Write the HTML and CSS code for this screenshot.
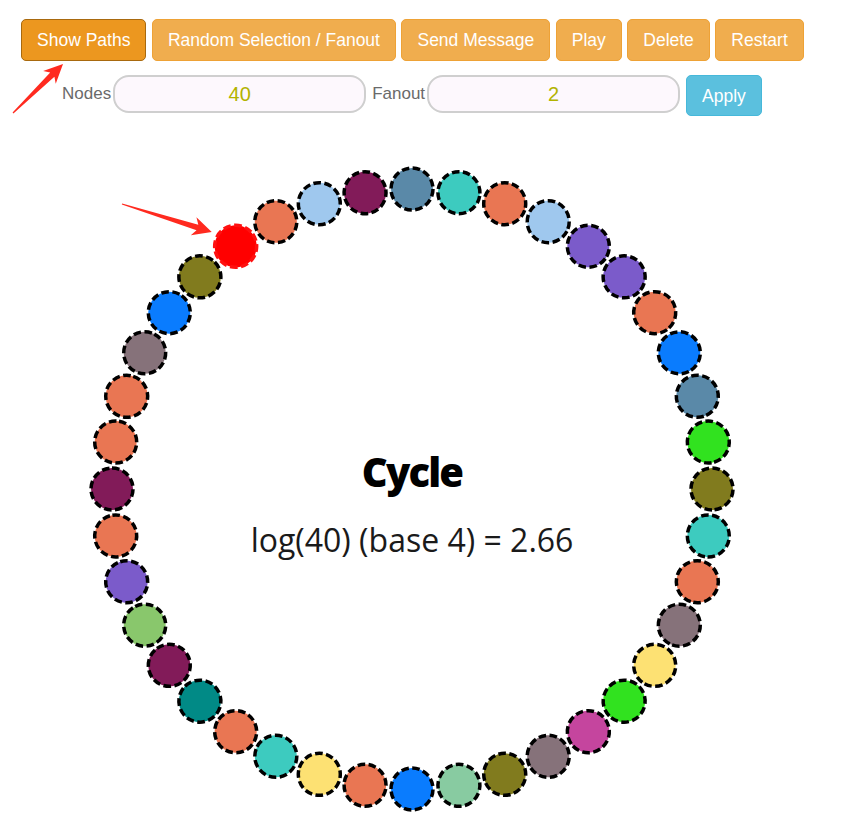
FILE: index.html
```html
<!DOCTYPE html>
<html>
<head>
<meta charset="utf-8">
<link rel="stylesheet" href="styles.css">
</head>
<body>
<div class="app">
  <div class="toolbar">
    <button class="btn btn-warning active">Show Paths</button>
    <button class="btn btn-warning">Random Selection / Fanout</button>
    <button class="btn btn-warning">Send Message</button>
    <button class="btn btn-warning">Play</button>
    <button class="btn btn-warning">Delete</button>
    <button class="btn btn-warning">Restart</button>
  </div>
  <div class="params">
    <label class="param-label label-nodes">Nodes</label>
    <input class="param-input input-nodes" type="text" value="40">
    <label class="param-label label-fanout">Fanout</label>
    <input class="param-input input-fanout" type="text" value="2">
    <button class="btn btn-info">Apply</button>
  </div>
</div>

<svg class="graph" width="848" height="697" viewBox="0 0 848 697">
  <g transform="translate(412 359)">
    <circle class="node c-steel" r="21" cy="-300" transform="rotate(0)"/>
    <circle class="node c-teal" r="21" cy="-300" transform="rotate(9)"/>
    <circle class="node c-orange" r="21" cy="-300" transform="rotate(18)"/>
    <circle class="node c-lightblue" r="21" cy="-300" transform="rotate(27)"/>
    <circle class="node c-purple" r="21" cy="-300" transform="rotate(36)"/>
    <circle class="node c-purple" r="21" cy="-300" transform="rotate(45)"/>
    <circle class="node c-orange" r="21" cy="-300" transform="rotate(54)"/>
    <circle class="node c-blue" r="21" cy="-300" transform="rotate(63)"/>
    <circle class="node c-steel" r="21" cy="-300" transform="rotate(72)"/>
    <circle class="node c-green" r="21" cy="-300" transform="rotate(81)"/>
    <circle class="node c-olive" r="21" cy="-300" transform="rotate(90)"/>
    <circle class="node c-teal" r="21" cy="-300" transform="rotate(99)"/>
    <circle class="node c-orange" r="21" cy="-300" transform="rotate(108)"/>
    <circle class="node c-mauve" r="21" cy="-300" transform="rotate(117)"/>
    <circle class="node c-yellow" r="21" cy="-300" transform="rotate(126)"/>
    <circle class="node c-green" r="21" cy="-300" transform="rotate(135)"/>
    <circle class="node c-magenta" r="21" cy="-300" transform="rotate(144)"/>
    <circle class="node c-mauve" r="21" cy="-300" transform="rotate(153)"/>
    <circle class="node c-olive" r="21" cy="-300" transform="rotate(162)"/>
    <circle class="node c-mint" r="21" cy="-300" transform="rotate(171)"/>
    <circle class="node c-blue" r="21" cy="-300" transform="rotate(180)"/>
    <circle class="node c-orange" r="21" cy="-300" transform="rotate(189)"/>
    <circle class="node c-yellow" r="21" cy="-300" transform="rotate(198)"/>
    <circle class="node c-teal" r="21" cy="-300" transform="rotate(207)"/>
    <circle class="node c-orange" r="21" cy="-300" transform="rotate(216)"/>
    <circle class="node c-darkteal" r="21" cy="-300" transform="rotate(225)"/>
    <circle class="node c-plum" r="21" cy="-300" transform="rotate(234)"/>
    <circle class="node c-lightgreen" r="21" cy="-300" transform="rotate(243)"/>
    <circle class="node c-purple" r="21" cy="-300" transform="rotate(252)"/>
    <circle class="node c-orange" r="21" cy="-300" transform="rotate(261)"/>
    <circle class="node c-plum" r="21" cy="-300" transform="rotate(270)"/>
    <circle class="node c-orange" r="21" cy="-300" transform="rotate(279)"/>
    <circle class="node c-orange" r="21" cy="-300" transform="rotate(288)"/>
    <circle class="node c-mauve" r="21" cy="-300" transform="rotate(297)"/>
    <circle class="node c-blue" r="21" cy="-300" transform="rotate(306)"/>
    <circle class="node c-olive" r="21" cy="-300" transform="rotate(315)"/>
    <circle class="node c-red" r="21" cy="-300" transform="rotate(324)"/>
    <circle class="node c-orange" r="21" cy="-300" transform="rotate(333)"/>
    <circle class="node c-lightblue" r="21" cy="-300" transform="rotate(342)"/>
    <circle class="node c-plum" r="21" cy="-300" transform="rotate(351)"/>
    <text class="title" x="0" y="-2" text-anchor="middle">Cycle</text>
    <text class="formula" x="0" y="63" text-anchor="middle">log(40) (base 4) = 2.66</text>
  </g>
</svg>

<svg class="annotations" width="848" height="300" viewBox="0 0 848 300">
  <polygon class="arrow" transform="translate(13 113) rotate(-44.4)" points="0,-0.6 55,-3 51,-9 70,0 51,9 55,3 0,0.6"/>
  <polygon class="arrow" transform="translate(122 204) rotate(17.3)" points="0,-0.6 79,-3 75,-9.5 94,0 75,9.5 79,3 0,0.6"/>
</svg>
</body>
</html>
```
FILE: styles.css
```css
html, body {
  margin: 0;
  padding: 0;
  background: #ffffff;
}

body {
  position: relative;
  font-family: "Liberation Sans", Arial, sans-serif;
  width: 848px;
  height: 827px;
  overflow: hidden;
}

.app {
  padding: 19px 0 0 21px;
}

.toolbar {
  display: flex;
  gap: 5.5px;
}

.btn {
  box-sizing: border-box;
  height: 42px;
  padding: 10px 15px;
  font-family: "Liberation Sans", Arial, sans-serif;
  font-size: 17.5px;
  line-height: 20px;
  color: #ffffff;
  border: 1px solid transparent;
  border-radius: 5px;
  cursor: pointer;
  white-space: nowrap;
}

.btn-warning {
  background: #f0ad4e;
  border-color: #eea236;
}

.btn-warning.active {
  background: #ec971f;
  border-color: #a8690e;
}

.btn-info {
  background: #5bc0de;
  border-color: #46b8da;
  height: 41px;
  padding: 9px 15px;
}

.params {
  display: flex;
  align-items: flex-start;
  margin-top: 14px;
  padding-left: 41px;
}

.param-label {
  font-size: 17px;
  line-height: 38px;
  color: #6a6a6a;
}

.label-nodes {
  margin-right: 2px;
}

.label-fanout {
  margin-left: 6px;
  margin-right: 2px;
}

.param-input {
  box-sizing: border-box;
  width: 253px;
  height: 38px;
  border: 2px solid #cfcfcf;
  border-radius: 16px;
  background: #fdf8fd;
  text-align: center;
  font-family: "Liberation Sans", Arial, sans-serif;
  font-size: 20px;
  color: #b2b300;
  outline: none;
}

.input-fanout {
  margin-right: 6px;
}

.graph {
  display: block;
  margin-top: 14px;
}

.node {
  stroke: #000000;
  stroke-width: 3.5;
  stroke-dasharray: 7.5 3.5;
}

.c-steel { fill: #5a89a8; }
.c-teal { fill: #3dcbbf; }
.c-orange { fill: #e97653; }
.c-lightblue { fill: #9fc8ee; }
.c-purple { fill: #7b5bca; }
.c-blue { fill: #0a7cfe; }
.c-green { fill: #31e21f; }
.c-olive { fill: #817b1e; }
.c-mauve { fill: #86727a; }
.c-yellow { fill: #fde173; }
.c-magenta { fill: #c5459e; }
.c-mint { fill: #88cba1; }
.c-darkteal { fill: #018a86; }
.c-plum { fill: #821b59; }
.c-lightgreen { fill: #89c76c; }
.c-red { fill: #ff0000; stroke: #ff1010; }

.title {
  font-family: "Open Sans", "Noto Sans", sans-serif;
  font-weight: 800;
  font-size: 40px;
  letter-spacing: -1.8px;
  fill: #000000;
}

.formula {
  font-family: "Open Sans", "Noto Sans", sans-serif;
  font-weight: 400;
  font-size: 32px;
  fill: #1a1a1a;
}

.annotations {
  position: absolute;
  top: 0;
  left: 0;
  pointer-events: none;
}

.arrow {
  fill: #ff2a1f;
}
```
